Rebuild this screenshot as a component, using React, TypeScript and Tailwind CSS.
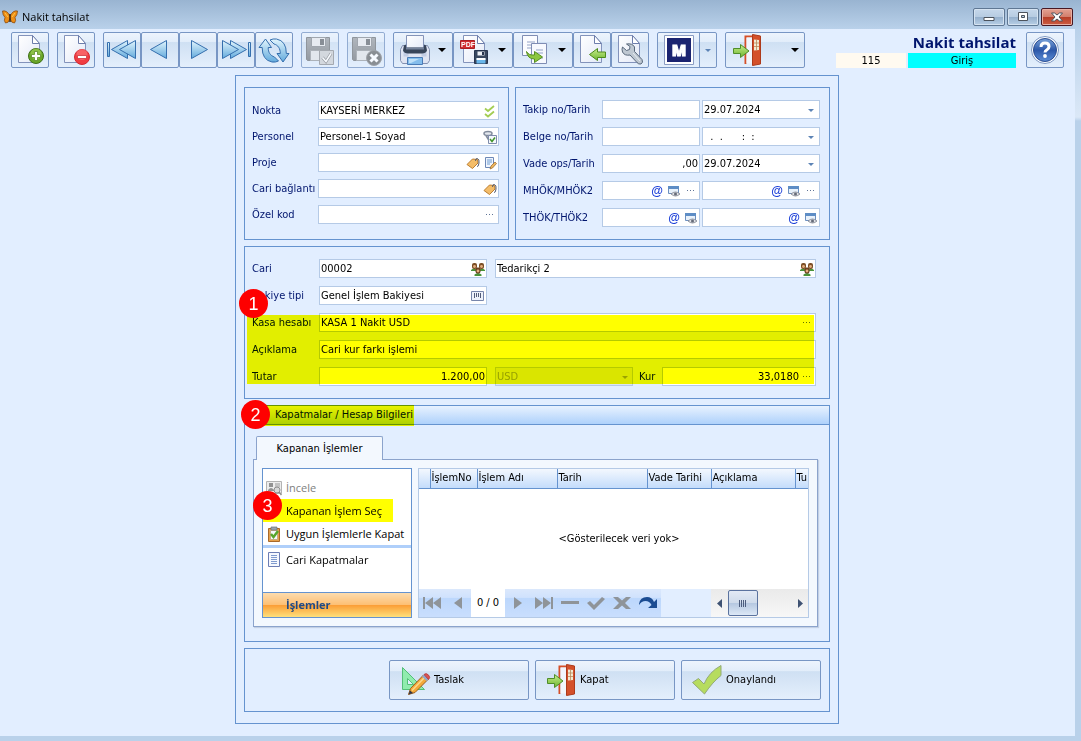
import React, { useId } from 'react';
import clsx from 'clsx';

const tahoma = "font-['DejaVu_Sans_Condensed','DejaVu_Sans',sans-serif]";
const segoe = "font-['Open_Sans','Noto_Sans',sans-serif]";

/* ---------- icons ---------- */

const Gradients = () => (
  <svg width="0" height="0" className="absolute" aria-hidden="true">
    <defs>
      <linearGradient id="arrowBlue" x1="0" y1="0" x2="0" y2="1">
        <stop offset="0" stopColor="#e2f5fd" />
        <stop offset="1" stopColor="#62aadc" />
      </linearGradient>
      <linearGradient id="arrowGreen" x1="0" y1="0" x2="0" y2="1">
        <stop offset="0" stopColor="#c9ee8c" />
        <stop offset="1" stopColor="#6cb52f" />
      </linearGradient>
      <linearGradient id="paper" x1="0" y1="0" x2="1" y2="1">
        <stop offset="0" stopColor="#ffffff" />
        <stop offset="1" stopColor="#e3e9f7" />
      </linearGradient>
      <linearGradient id="greyDisk" x1="0" y1="0" x2="0" y2="1">
        <stop offset="0" stopColor="#a0a4a8" />
        <stop offset="1" stopColor="#7a7e82" />
      </linearGradient>
      <linearGradient id="helpBlue" x1="0" y1="0" x2="0" y2="1">
        <stop offset="0" stopColor="#7ba5dc" />
        <stop offset="0.5" stopColor="#2c57a8" />
        <stop offset="1" stopColor="#5d8ed6" />
      </linearGradient>
    </defs>
  </svg>
);

const Svg = ({ size = 32, children }: { size?: number; children: React.ReactNode }) => (
  <svg width={size} height={size} viewBox={`0 0 ${size} ${size}`} fill="none" aria-hidden="true" className="shrink-0">
    {children}
  </svg>
);

const Paper = () => (
  <>
    <path d="M4.500 1.500h14l7 8v19h-21z" fill="url(#paper)" stroke="#8393bb" />
    <path d="M18.500 1.500v8h7z" fill="#fff" stroke="#6c7dab" />
  </>
);

const NewIcon = () => (
  <Svg>
    <Paper />
    <circle cx="22" cy="22" r="7.500" fill="#6aa728" stroke="#3f7016" />
    <circle cx="22" cy="20" r="5.500" fill="#a3d05c" opacity=".6" />
    <path d="M20.500 17.500h3v3h3v3h-3v3h-3v-3h-3v-3h3z" fill="#fff" stroke="#4d8217" strokeWidth=".7" />
  </Svg>
);

const DeleteIcon = () => (
  <Svg>
    <Paper />
    <circle cx="22" cy="23" r="7.500" fill="#f03c42" stroke="#d52a33" />
    <circle cx="22" cy="20.500" r="5.500" fill="#ff8588" opacity=".5" />
    <path d="M17.500 21.500h9v3h-9z" fill="#fff" stroke="#c9222c" strokeWidth=".7" />
  </Svg>
);

const blue = { fill: 'url(#arrowBlue)', stroke: '#356fae', strokeLinejoin: 'round' as const };

const FirstIcon = () => (
  <Svg>
    <path d="M1.500 8.500h2v14h-2z" {...blue} />
    <path d="M21.500 6.500v18l-16-9z" {...blue} />
    <path d="M29.500 6.500v18l-16-9z" {...blue} />
  </Svg>
);
const PrevIcon = () => (
  <Svg>
    <path d="M22.500 6.500v18l-16-9z" {...blue} />
  </Svg>
);
const NextIcon = () => (
  <Svg>
    <path d="M9.500 6.500v18l16-9z" {...blue} />
  </Svg>
);
const LastIcon = () => (
  <Svg>
    <path d="M10.500 6.500v18l16-9z" {...blue} />
    <path d="M2.500 6.500v18l16-9z" {...blue} />
    <path d="M28.500 8.500h2v14h-2z" {...blue} />
  </Svg>
);
const RefreshIcon = () => (
  <Svg>
    <path d="M7.500 5l6 8.500h-3.300c0 5 2 8 6.300 9.500l4 4q-3 1.500-6.500 1Q4 26 4.200 13.500H1z" {...blue} />
    <path d="M25 28l-6-8.500h3.300c0-5-2.300-8.500-6.300-9.500l-4-4q3-1.500 6.500-1Q28.500 7 28.300 19.500H31z" {...blue} />
  </Svg>
);

const Disk = () => (
  <>
    <path d="M2.500 3.500h23v23h-22l-1-1z" fill="url(#greyDisk)" stroke="#74787c" />
    <path d="M7.500 3.500h14v9h-14z" fill="#e9ebed" stroke="#8b8f93" />
    <path d="M16 5h4v6h-4z" fill="#6b6f73" />
    <path d="M6.500 16.500h15v10h-15z" fill="#e3e5e7" stroke="#9b9fa2" />
  </>
);
const SaveIcon = () => (
  <Svg>
    <Disk />
    <path d="M15.500 16.500h14v14h-14z" fill="#cfd1d3" stroke="#909396" />
    <path d="M18.500 23.500l3.500 4 5-8" stroke="#808386" strokeWidth="3" />
    <path d="M18.500 23.500l3.500 4 5-8" stroke="#fff" strokeWidth="1.500" />
  </Svg>
);
const SaveCloseIcon = () => (
  <Svg>
    <Disk />
    <circle cx="24" cy="24" r="7.500" fill="#6c6e70" stroke="#8a8c8e" />
    <path d="M20.500 20.500l7 7m0-7l-7 7" stroke="#fff" strokeWidth="3" />
  </Svg>
);

const PrinterIcon = () => (
  <Svg>
    <path d="M1.500 15.500l2-4h25l2 4v11l-2 3h-25l-2-3z" fill="#dfe4f2" stroke="#8390b1" />
    <path d="M4.500 12.500h5v10h-5zM22.500 12.500h5v10h-5z" fill="#c2cce3" />
    <path d="M7.500 1.500h17v14h-17z" fill="url(#paper)" stroke="#8493b8" />
    <path d="M5 11.500l2-1v3h18v-3l2 1 1 5q-1 3-5 3H9q-4 0-5-3z" fill="#38455a" />
    <path d="M7 13.500h18v2H7z" fill="#75839a" />
    <path d="M8.500 23.500h15v7h-15z" fill="#84bdec" stroke="#4a7bb6" />
    <path d="M10 25h10l-8 4h-2z" fill="#bfe0f8" />
  </Svg>
);

const PdfIcon = () => (
  <Svg>
    <Paper />
    <path d="M1.500 6.500h14v8h-14z" fill="#d22d2f" stroke="#a91e22" />
    <text x="2" y="13" fontSize="7" fontWeight="700" fill="#fff" className="font-['Liberation_Sans',sans-serif]">PDF</text>
    <path d="M15.500 16.500h13v13h-13z" fill="#39475f" stroke="#28354e" />
    <path d="M18.500 17.500h7v4h-7z" fill="#eef1f6" />
    <path d="M23 18h2v3h-2z" fill="#28354e" />
    <path d="M17.500 24.500h9v5h-9z" fill="#69b6ea" />
    <path d="M17.500 24h9v2h-9z" fill="#fff" />
  </Svg>
);

const CopyIcon = () => (
  <Svg>
    <path d="M3.500 1.500h15v20h-15z" fill="#fbfcff" stroke="#7f8db4" />
    <path d="M8 8h8M8 11h5M8 14h4" stroke="#93a3c6" />
    <path d="M12.500 9.500h15v20h-15z" fill="#f7f9fe" stroke="#7f8db4" />
    <path d="M17 16h7M17 19h7M17 24h7" stroke="#93a3c6" />
    <path d="M7.500 17.500q2 4 8 3.500v-3.500l8 5.500-8 5.500v-3.500q-7 0-8-7.500z" fill="#8dc73f" stroke="#558f1f" />
  </Svg>
);

const ImportIcon = () => (
  <Svg>
    <Paper />
    <path d="M13.500 20.500l8-6v3.500h8v5.500h-8v3z" fill="url(#arrowGreen)" stroke="#4c8a1c" />
  </Svg>
);

const ToolsIcon = () => (
  <Svg>
    <Paper />
    <path
      d="M8.500 13l4 3.500 3-1 .5-3-3.500-2.500q6-1 8 3v4.500l7.500 8q1.500 3-1 4.500-2.500.5-4-1.500l-7-7.500q-5.500 1-7.500-3-1-3 0-5z"
      fill="#bfc8d2"
      stroke="#59687b"
    />
    <path d="M19 19l7 8" stroke="#e8edf2" />
  </Svg>
);

const LogoM = () => (
  <svg width="30" height="30" viewBox="0 0 30 30" aria-hidden="true">
    <path d="M.5.5h29v29H.5z" fill="#fff" stroke="#8a9cc3" />
    <path d="M3 3h24v24H3z" fill="#1b2470" />
    <text x="15" y="21" textAnchor="middle" fontSize="15" fontWeight="800" fill="#fff" stroke="#fff" strokeWidth="1" className="font-['Open_Sans',sans-serif]">M</text>
  </svg>
);

const DoorIcon = () => (
  <Svg>
    <path d="M14.500 30V2.500H23" stroke="#d64f27" strokeWidth="2" />
    <path d="M15.500 3.500h6v26h-6z" fill="#f2f5fb" />
    <path d="M21.500.5l8 1.500v28l-8 1.500z" fill="#d4502a" stroke="#ad3a1a" />
    <path d="M23 5.500l5 .5v10l-5 .5z" fill="#f2ead2" />
    <path d="M25.500 5.500v11M23 9h5M23 12.500h5" stroke="#b98a5a" strokeWidth=".8" />
    <path d="M2.500 14.500h7v-4l8.500 6.500-8.500 6.500v-4h-7z" fill="url(#arrowGreen)" stroke="#4f8d2a" />
  </Svg>
);

const HelpIcon = () => (
  <Svg>
    <circle cx="16" cy="16" r="13.500" fill="#fff" stroke="#7d97c4" />
    <circle cx="16" cy="16" r="11.500" fill="url(#helpBlue)" stroke="#2b4c90" />
    <path d="M12 13q0-4 4-4t4 3.500q0 2-2 3.200t-2 2.800" stroke="#fff" strokeWidth="3" />
    <circle cx="16" cy="22" r="1.900" fill="#fff" />
  </Svg>
);

const DraftIcon = () => (
  <Svg>
    <path d="M3.500 3.500v22h22z" fill="#90ecae" stroke="#54bf78" />
    <path d="M8.500 14.500v6h6z" fill="#e2eeff" stroke="#54bf78" />
    <path d="M9.500 30.500l2-6 13-13.500 4.500 4.500L16 28.500z" fill="#f3a93a" stroke="#9b5f20" />
    <path d="M13 26.500L26 13" stroke="#fbd98c" strokeWidth="1.500" />
    <path d="M9.500 30.500l1.500-4 3 2.500z" fill="#33384a" />
    <path d="M23 12.500l2-2 4.500 4.500-2 2z" fill="#93a6cb" />
    <path d="M25 10.500q2-2 4.500.5t0 4.500z" fill="#dc5353" stroke="#ac3232" strokeWidth=".7" />
  </Svg>
);

const ApproveIcon = () => (
  <Svg>
    <path d="M1.500 18.500l6-4 5.500 5.500Q18 8 30 1.500v10q-8 6-16.500 18.500z" fill="#b6dc5f" stroke="#93aa78" strokeLinejoin="round" />
  </Svg>
);

const Butterfly = () => (
  <Svg size={16}>
    <path d="M8 7Q5 1 .5 2q0 4 2.500 6.500-1.500 3 .5 5.500 3 .5 4.500-4.500 1.500 5 4.500 4.500 2-2.500.5-5.500Q15.500 6 15.500 2 11 1 8 7z" fill="#ef8f16" stroke="#7a4210" strokeWidth=".7" />
    <path d="M8 5v8" stroke="#39220d" strokeWidth="1.500" />
    <path d="M3 4l3 4M13 4l-3 4" stroke="#fcc64c" />
  </Svg>
);

const DoubleCheck = () => (
  <Svg size={14}>
    <path d="M2 4.500l3 2.500 6-5M2 10l3 2.500 6-5" stroke="#a3cd53" strokeWidth="1.800" />
  </Svg>
);
const PersonCheck = () => (
  <Svg size={14}>
    <path d="M1 3.500q0-2 4-2t4 2-4 2-4-2zM3 5.500l3 5" stroke="#818b9c" strokeWidth="1.500" fill="#e3e7ee" />
    <path d="M5.500 5.500h8v8h-8z" fill="#f4f7fc" stroke="#7f8cab" />
    <path d="M7 9l2 2.500 3-4" stroke="#41952b" strokeWidth="1.500" />
  </Svg>
);
const TagIcon = () => (
  <Svg size={14}>
    <path d="M1 8.500L6.500 3l5 .5.500 3.500-5.500 5.500z" fill="#f4bd69" stroke="#bc7e30" />
    <path d="M9.500 5q0-3 2-2.500t1.500 4.500-2 3.500" stroke="#555d70" />
  </Svg>
);
const NoteEdit = () => (
  <Svg size={14}>
    <path d="M2.500 1.500h8v8l-2 2h-6z" fill="#f0f5fd" stroke="#6d88b7" />
    <path d="M4 4h5M4 6h5M4 8h3" stroke="#6d9bd1" />
    <path d="M7 13l1-3 4-4 1.500 1.500-4 4.500z" fill="#efb65b" stroke="#93662c" strokeWidth=".7" />
  </Svg>
);
const PreviewIcon = () => (
  <Svg size={14}>
    <path d="M1.500 2.500h10v7h-10z" fill="#e8f1fb" stroke="#6c8fbf" />
    <path d="M1 2h11v3H1z" fill="#5e8dc5" />
    <path d="M4 10q4.500-4 9 0-4.500 4-9 0z" fill="#dfe1e6" stroke="#7a7f8c" strokeWidth=".8" />
    <circle cx="8.500" cy="10" r="1.500" fill="#666b79" />
  </Svg>
);
const PeopleIcon = () => (
  <Svg size={14}>
    <path d="M0 8q3-3 6 0v1H0zM8 8q3-3 6 0v1H8zM3.500 12.500q3.500-3 7 0V14h-7z" fill="#4a9339" />
    <rect x="1" y="1" width="5" height="6" rx="2" fill="#7b4e26" />
    <rect x="8" y="1" width="5" height="6" rx="2" fill="#7b4e26" />
    <rect x="4.500" y="5.500" width="5" height="6" rx="2" fill="#6d4220" />
    <circle cx="3.500" cy="4.500" r="1.400" fill="#e4b081" />
    <circle cx="10.500" cy="4.500" r="1.400" fill="#e4b081" />
    <circle cx="7" cy="9" r="1.400" fill="#e4b081" />
  </Svg>
);
const BarsIcon = () => (
  <Svg size={14}>
    <path d="M.5 2.500h12v9H.5z" fill="#eef2fb" stroke="#7886ab" />
    <path d="M3.500 4v5M5.500 4v4M7.500 4v4M9.500 4v5" stroke="#525b78" />
  </Svg>
);
const Dots = () => (
  <Svg size={14}>
    <path d="M3 6h1v1H3zM6 6h1v1H6zM9 6h1v1H9z" fill="#5f7396" />
  </Svg>
);
const Caret = ({ color = '#5c83b5' }: { color?: string }) => (
  <Svg size={14}>
    <path d="M4 6h6L7 9z" fill={color} />
  </Svg>
);
const AtIcon = () => (
  <span className="font-['Liberation_Sans',sans-serif] text-xs font-bold leading-[14px] text-[#1c3fd8]">@</span>
);

const icons = {
  check: <DoubleCheck />,
  person: <PersonCheck />,
  tag: <TagIcon />,
  note: <NoteEdit />,
  preview: <PreviewIcon />,
  people: <PeopleIcon />,
  bars: <BarsIcon />,
  dots: <Dots />,
  caret: <Caret />,
  at: <AtIcon />,
};

const iconNames = {
  check: 'Onay',
  person: 'Personel seç',
  tag: 'Etiket',
  note: 'Düzenle',
  preview: 'Önizle',
  people: 'Cari seç',
  bars: 'Seçenekler',
  dots: 'Seç',
  caret: 'Takvim',
  at: 'Etki alanı',
};

type IconKey = keyof typeof icons;

/* ---------- form pieces ---------- */

interface BoxProps {
  id?: string;
  label?: string;
  value?: string;
  right?: boolean;
  buttons?: IconKey[];
  className?: string;
}

const Box = ({ id, label, value = '', right, buttons = [], className }: BoxProps) => (
  <div className={clsx('flex h-[19px] min-w-0 items-center border border-[#b5cae6] bg-white', className)}>
    <input
      id={id}
      aria-label={label}
      defaultValue={value}
      className={clsx('h-full w-full min-w-0 flex-1 whitespace-pre bg-transparent px-px text-black outline-none', right && 'text-right')}
    />
    {buttons.length > 0 && (
      <div className="flex gap-[3px] pr-px">
        {buttons.map((key) => (
          <button key={key} type="button" aria-label={iconNames[key]} className="flex size-[14px] items-center justify-center">
            {icons[key]}
          </button>
        ))}
      </div>
    )}
  </div>
);

interface RowProps {
  label: string;
  labelClass: string;
  first: BoxProps;
  second?: BoxProps;
}

const Row = ({ label, labelClass, first, second }: RowProps) => {
  const id = useId();
  return (
    <div className="flex items-center gap-0.5">
      <label htmlFor={id} className={clsx('shrink-0 whitespace-nowrap', labelClass)}>{label}</label>
      <Box id={id} {...first} />
      {second && <Box label={`${label} 2`} {...second} />}
    </div>
  );
};

const leftRows: { label: string; value?: string; buttons: IconKey[] }[] = [
  { label: 'Nokta', value: 'KAYSERİ MERKEZ', buttons: ['check'] },
  { label: 'Personel', value: 'Personel-1 Soyad', buttons: ['person'] },
  { label: 'Proje', buttons: ['tag', 'note'] },
  { label: 'Cari bağlantı', buttons: ['tag'] },
  { label: 'Özel kod', buttons: ['dots'] },
];

const rightRows: { label: string; first: BoxProps; second: BoxProps }[] = [
  { label: 'Takip no/Tarih', first: {}, second: { value: '29.07.2024', buttons: ['caret'] } },
  { label: 'Belge no/Tarih', first: {}, second: { value: '  .  .      :  :', buttons: ['caret'] } },
  { label: 'Vade ops/Tarih', first: { value: ',00', right: true }, second: { value: '29.07.2024', buttons: ['caret'] } },
  { label: 'MHÖK/MHÖK2', first: { buttons: ['at', 'preview', 'dots'] }, second: { buttons: ['at', 'preview', 'dots'] } },
  { label: 'THÖK/THÖK2', first: { buttons: ['at', 'preview'] }, second: { buttons: ['at', 'preview'] } },
];

const Group = ({ className, children }: { className?: string; children: React.ReactNode }) => (
  <section className={clsx('border border-[#6593cf]', className)}>{children}</section>
);

const Step = ({ n, className }: { n: number; className: string }) => (
  <span
    className={clsx(
      "pointer-events-none absolute z-10 flex size-[29px] items-center justify-center rounded-full bg-[#fe0000] font-['Liberation_Sans',sans-serif] text-lg leading-none text-white",
      className
    )}
  >
    {n}
  </span>
);

const Highlight = ({ className }: { className: string }) => (
  <div className={clsx('pointer-events-none absolute bg-[#ffff00] mix-blend-multiply', className)} />
);

/* ---------- toolbar ---------- */

const glossy =
  'rounded-xs border border-[#7896c4] bg-[linear-gradient(#edf4fd_0%,#e2edfa_26%,#cfe0f3_28%,#e4effc_100%)]';

interface ToolProps {
  name: string;
  icon: React.ReactNode;
  menu?: boolean;
  wide?: boolean;
  disabled?: boolean;
}

const Tool = ({ name, icon, menu, wide, disabled }: ToolProps) => (
  <button
    type="button"
    aria-label={name}
    disabled={disabled}
    className={clsx('flex h-9 shrink-0 items-center', glossy, disabled && 'opacity-75', wide ? 'w-20 justify-between px-[5px]' : menu ? 'w-[60px] justify-between pl-[5px]' : 'w-[38px] justify-center')}
  >
    {icon}
    {menu && (
      <svg width="8" height="4" viewBox="0 0 8 4" className={wide ? '' : 'mr-[6px]'} aria-hidden="true">
        <path d="M0 0h8L4 4z" fill="#000" />
      </svg>
    )}
  </button>
);

const Toolbar = () => (
  <div className="flex items-start gap-2 pl-[11px] pr-[11px] pt-[3px]">
    <Tool name="Yeni" icon={<NewIcon />} />
    <Tool name="Sil" icon={<DeleteIcon />} />
    <div className="flex">
      <Tool name="İlk" icon={<FirstIcon />} />
      <Tool name="Önceki" icon={<PrevIcon />} />
      <Tool name="Sonraki" icon={<NextIcon />} />
      <Tool name="Son" icon={<LastIcon />} />
      <Tool name="Yenile" icon={<RefreshIcon />} />
    </div>
    <Tool name="Kaydet" icon={<SaveIcon />} disabled />
    <Tool name="Vazgeç" icon={<SaveCloseIcon />} disabled />
    <div className="flex">
      <Tool name="Yazdır" icon={<PrinterIcon />} menu />
      <Tool name="PDF kaydet" icon={<PdfIcon />} menu />
      <Tool name="Kopyala" icon={<CopyIcon />} menu />
      <Tool name="İçeri al" icon={<ImportIcon />} />
      <Tool name="Araçlar" icon={<ToolsIcon />} />
    </div>
    <div className={clsx('flex h-9 w-[60px] shrink-0', glossy)}>
      <button type="button" aria-label="M" className="flex flex-1 items-center justify-center border-r border-[#7896c4]">
        <LogoM />
      </button>
      <button type="button" aria-label="M menüsü" className="flex w-4 items-center justify-center">
        <Caret />
      </button>
    </div>
    <Tool name="Çıkış" icon={<DoorIcon />} menu wide />
    <div className="ml-auto flex shrink-0 items-start gap-[10px]">
      <div className="flex flex-col items-end">
        <h1 className={clsx('h-[21px] text-[15px] font-bold leading-[21px]', segoe)}>Nakit tahsilat</h1>
        <div className="flex gap-0.5 text-center leading-[15px] text-black">
          <span className="w-[70px] bg-[#fffaf0]">115</span>
          <span className="w-[108px] bg-[#00ffff]">Giriş</span>
        </div>
      </div>
      <Tool name="Yardım" icon={<HelpIcon />} />
    </div>
  </div>
);

const TitleBar = () => (
  <header className="flex h-[29px] items-start justify-between bg-linear-to-b from-[#99b4d1] to-[#b9d1ea]">
    <div className={clsx('flex items-center gap-1 pl-0.5 pt-[9px] text-black', segoe)}>
      <Butterfly />
      <span>Nakit tahsilat</span>
    </div>
    <div className="flex gap-0.5 pr-2 pt-2">
      {['Simge durumuna küçült', 'Ekranı kapla'].map((name, i) => (
        <button
          key={name}
          type="button"
          aria-label={name}
          className="flex h-[18px] w-8 items-center justify-center rounded-xs border border-[#5f7793] bg-[linear-gradient(#c6d8eb_0%,#b7cce2_48%,#94afcc_50%,#b8cfe6_100%)] shadow-[inset_0_0_0_1px_#d5e3f1]"
        >
          <svg width="12" height="10" viewBox="0 0 12 10" fill="#fff" stroke="#4c535c" aria-hidden="true">
            {i === 0 ? <path d="M1 5.500h10v3H1z" /> : <path fillRule="evenodd" d="M1.500.5h9v8h-9zM4.500 3.500v2h3v-2z" />}
          </svg>
        </button>
      ))}
      <button
        type="button"
        aria-label="Kapat"
        className="flex h-[18px] w-8 items-center justify-center rounded-xs border border-[#481823] bg-[linear-gradient(#e3a192_0%,#d27f6c_48%,#b63d26_50%,#cc5d42_100%)] shadow-[inset_0_0_0_1px_#e8afa3]"
      >
        <svg width="12" height="10" viewBox="0 0 12 10" fill="#fff" stroke="#4c535c" aria-hidden="true">
          <path d="M.5 1h3L6 3l2.500-2h3L8 5l3.500 4h-3L6 7 3.500 9h-3L4 5z" />
        </svg>
      </button>
    </div>
  </header>
);

/* ---------- account section ---------- */

const AccountSection = () => {
  const id = useId();
  const label = 'w-[67px] shrink-0 whitespace-nowrap';
  return (
    <Group className="relative flex flex-col gap-2 pb-3 pl-[7px] pr-[13px] pt-3">
      <div className="flex items-center">
        <label htmlFor={`${id}cari`} className={label}>Cari</label>
        <Box id={`${id}cari`} value="00002" buttons={['people']} className="w-[168px] shrink-0" />
        <Box label="Cari adı" value="Tedarikçi 2" buttons={['people']} className="ml-2 flex-1" />
      </div>
      <div className="flex items-center">
        <label htmlFor={`${id}bakiye`} className={label}>Bakiye tipi</label>
        <Box id={`${id}bakiye`} value="Genel İşlem Bakiyesi" buttons={['bars']} className="w-[168px] shrink-0" />
      </div>
      <div className="flex items-center">
        <label htmlFor={`${id}kasa`} className={label}>Kasa hesabı</label>
        <Box id={`${id}kasa`} value="KASA 1 Nakit USD" buttons={['dots']} className="flex-1" />
      </div>
      <div className="flex items-center">
        <label htmlFor={`${id}aciklama`} className={label}>Açıklama</label>
        <Box id={`${id}aciklama`} value="Cari kur farkı işlemi" className="flex-1" />
      </div>
      <div className="flex items-center">
        <label htmlFor={`${id}tutar`} className={label}>Tutar</label>
        <Box id={`${id}tutar`} value="1.200,00" right className="w-[168px] shrink-0" />
        <div className="ml-2 flex h-[19px] w-[138px] shrink-0 items-center border border-[#b5cae6] bg-[#dae5f3]">
          <select disabled aria-label="Döviz" defaultValue="USD" className="h-full flex-1 appearance-none bg-transparent px-px text-[#97a1b1] opacity-100">
            <option>USD</option>
          </select>
          <Caret color="#9aa3b3" />
        </div>
        <label htmlFor={`${id}kur`} className="w-[29px] shrink-0 pl-[6px]">Kur</label>
        <Box id={`${id}kur`} value="33,0180" right buttons={['dots']} className="flex-1" />
      </div>
      <Highlight className="bottom-[14px] left-[2px] right-[15px] top-[68px]" />
      <Step n={1} className="-left-[6px] top-[42px]" />
    </Group>
  );
};

/* ---------- closing transactions ---------- */

const actionIcons = {
  inspect: (
    <Svg size={16}>
      <path d="M.5 1.500h15v12H.5z" fill="#ededed" stroke="#b3b3b3" />
      <path d="M3 3h4v4H3zM2 10q3-4 6 0v1H2z" fill="#929292" />
      <path d="M9 4h5M9 6h5" stroke="#999" />
      <circle cx="11" cy="10" r="3" fill="#d8d8d8" stroke="#8f8f8f" />
      <path d="M13 12l2.500 3" stroke="#8f8f8f" strokeWidth="1.500" />
    </Svg>
  ),
  clipboard: (
    <Svg size={16}>
      <path d="M2.500 2.500h11v13h-11z" fill="#e5a04b" stroke="#a8692a" />
      <path d="M4.500 4.500h7v9h-7z" fill="#f5f7fb" stroke="#c9ab81" />
      <path d="M5 1h6v3H5z" fill="#9aa3ad" stroke="#6b747e" strokeWidth=".7" />
      <path d="M5 8l2.500 3L12 5" stroke="#57a52c" strokeWidth="2.500" />
    </Svg>
  ),
  list: (
    <Svg size={16}>
      <path d="M2.500.5h11v14h-11z" fill="#f5f8fe" stroke="#6c7db4" />
      <path d="M5 3.500h6M5 5.500h6M5 7.500h6M5 9.500h6M5 11.500h6" stroke="#7f9ace" />
    </Svg>
  ),
};

const ActionList = () => (
  <div className={clsx('flex w-[150px] shrink-0 flex-col border border-[#6593cf] bg-white text-black', segoe)}>
    <div className="flex flex-col pt-[7px]">
      <button type="button" disabled className="flex h-[23px] items-center gap-1 whitespace-nowrap pl-[3px] text-[#808080]">
        {actionIcons.inspect}İncele
      </button>
      <button type="button" className="relative flex h-[23px] items-center gap-1 whitespace-nowrap pl-[3px]">
        <span className="size-4 shrink-0" />
        Kapanan İşlem Seç
        <Highlight className="bottom-0 left-0 right-[18px] top-0" />
        <Step n={3} className="-left-[10px] -top-[8px]" />
      </button>
      <button type="button" className="flex h-[23px] items-center gap-1 whitespace-nowrap pl-[3px]">
        {actionIcons.clipboard}Uygun İşlemlerle Kapat
      </button>
      <hr className="h-[3px] border-0 bg-[#afcffa]" />
      <button type="button" className="flex h-6 items-center gap-1 whitespace-nowrap pl-[3px]">
        {actionIcons.list}Cari Kapatmalar
      </button>
    </div>
    <button
      type="button"
      className="mt-auto h-[25px] border-t border-[#6593cf] bg-[linear-gradient(#fddcae_0%,#fdc075_48%,#fb9f37_52%,#fee07b_100%)] pl-[23px] text-left font-bold text-[#1f4a86]"
    >
      İşlemler
    </button>
  </div>
);

const columns = [
  { title: 'İşlemNo', width: 'w-[47px]' },
  { title: 'İşlem Adı', width: 'w-20' },
  { title: 'Tarih', width: 'w-[90px]' },
  { title: 'Vade Tarihi', width: 'w-16' },
  { title: 'Açıklama', width: 'w-[84px]' },
  { title: 'Tu', width: '' },
];

const NavButton = ({ name, d, dark }: { name: string; d: string; dark?: boolean }) => (
  <button type="button" aria-label={name} className="flex h-full w-[26px] items-center justify-center">
    <svg width="20" height="16" viewBox="0 0 20 16" fill={dark ? '#1b4c92' : '#8f9499'} aria-hidden="true">
      <path d={d} />
    </svg>
  </button>
);

const navGradient = 'bg-[linear-gradient(#dbe8fc_0%,#d0e2fd_30%,#bcd7fc_34%,#c9defd_100%)]';

const DataGrid = () => (
  <div className="flex min-w-0 flex-1 flex-col overflow-hidden border border-[#b5cae6] bg-white text-black">
    <table className="w-full table-fixed border-collapse">
      <thead>
        <tr className="h-[19px] bg-linear-to-b from-[#f3f8fe] to-[#c4dcfb]">
          <th className="w-[11px] border-b border-[#6593cf]" aria-label="Satır" />
          {columns.map((c) => (
            <th
              key={c.title}
              className={clsx('overflow-hidden whitespace-nowrap border-b border-l border-[#6593cf] pl-px text-left font-normal', c.width)}
            >
              {c.title}
            </th>
          ))}
        </tr>
      </thead>
      <tbody>
        <tr className="h-[101px]">
          <td />
          <td colSpan={6} className="text-center">&lt;Gösterilecek veri yok&gt;</td>
        </tr>
      </tbody>
    </table>
    <div className="flex h-7 bg-[#e2eeff]">
      <div className={clsx('flex', navGradient)}>
        <NavButton name="İlk kayıt" d="M1 2h2v12H1zM11 2v12L3 8zM19 2v12l-8-6z" />
        <NavButton name="Önceki kayıt" d="M14 2v12L6 8z" />
        <span className="flex w-[34px] items-center justify-center bg-white">0 / 0</span>
        <NavButton name="Sonraki kayıt" d="M6 2v12l8-6z" />
        <NavButton name="Son kayıt" d="M1 2v12l8-6zM9 2v12l8-6zM17 2h2v12h-2z" />
        <NavButton name="Kayıt sil" d="M1 6h18v3H1z" />
        <NavButton name="Onayla" d="M1 8l3-2 4 4 8-8 3 2L8 15z" />
        <NavButton name="İptal" d="M1 2h5l4 3.500L14 2h5l-6 6 6 6h-5l-4-3.500L6 14H1l6-6z" />
        <NavButton name="Yenile kayıt" dark d="M1 9q1-7 8-7 5 0 7 5l3-3v9h-9l3.500-3q-2-4-6-4-4 0-6.500 4z" />
      </div>
      <div className="ml-auto flex w-[97px] justify-between bg-linear-to-b from-[#eaeaea] to-[#f7f7f7]">
        <button type="button" aria-label="Sola kaydır" className="flex w-4 items-center justify-center">
          <svg width="5" height="9" viewBox="0 0 5 9" fill="#3f5273" aria-hidden="true"><path d="M5 0v9L0 4.500z" /></svg>
        </button>
        <button type="button" aria-label="Kaydırma çubuğu" className="mr-auto ml-px flex h-[26px] w-[30px] items-center justify-center self-center rounded-xs border border-[#5b739f] bg-[linear-gradient(#e3eaf5_0%,#cfdbeb_48%,#b4c7e0_50%,#dce8f6_100%)]">
          <svg width="8" height="7" viewBox="0 0 8 7" stroke="#4c5d7e" aria-hidden="true"><path d="M.5 0v7M2.500 0v7M4.500 0v7M6.500 0v7" /></svg>
        </button>
        <button type="button" aria-label="Sağa kaydır" className="flex w-4 items-center justify-center">
          <svg width="5" height="9" viewBox="0 0 5 9" fill="#3f5273" aria-hidden="true"><path d="M0 0v9l5-4.500z" /></svg>
        </button>
      </div>
    </div>
  </div>
);

const ClosingSection = () => (
  <Group className="relative">
    <h2 className="h-[19px] border-b border-[#6593cf] bg-linear-to-b from-[#e8f2ff] to-[#aed1fb] pl-[30px] font-normal leading-[18px]">
      Kapatmalar / Hesap Bilgileri
    </h2>
    <div className="pb-[14px] pl-2 pr-[11px] pt-[11px]">
      <div role="tablist" className="flex pl-[3px]">
        <button type="button" role="tab" aria-selected="true" className="relative z-10 -mb-px h-6 w-[127px] rounded-t-xs border border-b-0 border-[#8ba3cc] bg-[#f3f8fe] text-black">
          Kapanan İşlemler
        </button>
      </div>
      <div role="tabpanel" className="flex h-[168px] gap-[6px] border border-[#8ba3cc] bg-[#f3f8fe] p-2 shadow-[1px_1px_1px_#c3d0e4]">
        <ActionList />
        <DataGrid />
      </div>
    </div>
    <Highlight className="-top-px left-[2px] h-[21px] w-[167px]" />
    <Step n={2} className="-left-[4px] -top-[6px]" />
  </Group>
);

const footerButtons = [
  { name: 'Taslak', icon: <DraftIcon /> },
  { name: 'Kapat', icon: <DoorIcon /> },
  { name: 'Onaylandı', icon: <ApproveIcon /> },
];

const App = () => {
  return (
    <div className={clsx('flex min-h-screen flex-col bg-[#e2eeff] text-[11px] leading-[14px] text-[#00156e]', tahoma)}>
      <Gradients />
      <TitleBar />
      <div className="flex flex-1 border-b-[5px] border-[#b9d1ea]">
        <div className="flex min-w-0 flex-1 flex-col">
          <Toolbar />
          <div className="pb-3 pr-px pt-[7px]">
            <main className="mx-auto flex w-full max-w-[604px] flex-col gap-[6px] border border-[#6593cf] px-2 py-[11px]">
              <div className="flex gap-[6px]">
                <Group className="flex w-[265px] shrink-0 flex-col gap-[7px] pb-3 pl-[7px] pr-[9px] pt-[13px]">
                  {leftRows.map(({ label, value, buttons }) => (
                    <Row key={label} label={label} labelClass="w-16" first={{ value, buttons, className: 'flex-1' }} />
                  ))}
                </Group>
                <Group className="flex flex-1 flex-col gap-2 pb-3 pl-[7px] pr-[9px] pt-3">
                  {rightRows.map(({ label, first, second }) => (
                    <Row
                      key={label}
                      label={label}
                      labelClass="w-[77px]"
                      first={{ ...first, className: 'w-[98px]' }}
                      second={{ ...second, className: 'flex-1' }}
                    />
                  ))}
                </Group>
              </div>
              <AccountSection />
              <ClosingSection />
              <Group className="flex justify-end gap-[6px] py-[11px] pr-2">
                {footerButtons.map(({ name, icon }) => (
                  <button key={name} type="button" className={clsx('flex h-10 w-[140px] items-center gap-[3px] pl-[9px] text-black', glossy)}>
                    {icon}
                    {name}
                  </button>
                ))}
              </Group>
            </main>
          </div>
        </div>
        {/* window frame edge */}
        <div className="w-[6px] shrink-0 bg-[linear-gradient(#b9d1ea_0px,#dbe8f7_88px,#b9d1ea_92px)]" />
      </div>
    </div>
  );
};

export default App;
